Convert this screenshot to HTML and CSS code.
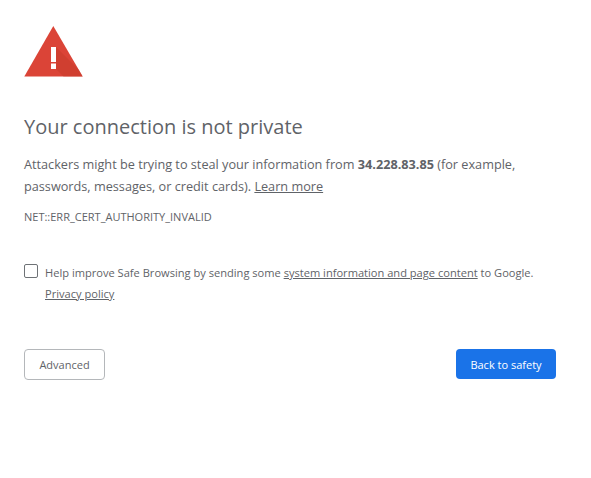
FILE: index.html
```html
<!DOCTYPE html>
<html lang="en">

<head>
    <meta charset="UTF-8">
    <meta name="viewport" content="width=device-width, initial-scale=1.0">
    <title>Privacy error</title>
    <link rel="stylesheet" href="styles.css">
</head>

<body>
    <div class="container">
        <!-- Warning icon -->
        <svg class="icon" width="60" height="52" viewBox="0 0 60 52">
            <path d="M29.3 1 L58.7 51.5 L0.3 51.5 Z" fill="#db4437" />
            <path d="M32 22 L54.8 44.8 L58.7 51.5 L39.5 51.5 L32 44 Z" fill="#c53929" opacity="0.5" />
            <rect x="27" y="22" width="5" height="15" fill="#fff" />
            <rect x="27" y="38.5" width="5" height="5.5" fill="#fff" />
        </svg>

        <h1>Your connection is not private</h1>
        <p class="message">Attackers might be trying to steal your information from <strong>34.228.83.85</strong> (for example, passwords, messages, or credit cards). <a href="#">Learn more</a></p>
        <p class="error-code">NET::ERR_CERT_AUTHORITY_INVALID</p>

        <!-- Safe Browsing opt in -->
        <div class="opt-in">
            <span class="checkbox"></span>
            <div>
                <p>Help improve Safe Browsing by sending some <a href="#">system information and page content</a> to Google.</p>
                <p><a href="#">Privacy policy</a></p>
            </div>
        </div>

        <div class="buttons">
            <button class="advanced">Advanced</button>
            <button class="back">Back to safety</button>
        </div>
    </div>
</body>

</html>
```

FILE: styles.css
```css
body {
    font-family: "Open Sans", "Noto Sans", Arial, sans-serif;
    margin: 0;
    padding: 0;
    background-color: #fff;
    color: #5f6368;
}

.container {
    width: 532px;
    padding: 25px 0 0 24px;
}

.icon {
    display: block;
    margin-bottom: 35px;
}

h1 {
    margin: 0;
    font-size: 20px;
    font-weight: 400;
    line-height: 30px;
}

a {
    color: #5f6368;
}

.message {
    margin: 11px 0 0;
    font-size: 12.7px;
    line-height: 22px;
}

.error-code {
    margin: 12px 0 0;
    font-size: 11px;
    line-height: 16px;
}

.opt-in {
    display: flex;
    margin-top: 37px;
    font-size: 11.1px;
    line-height: 21px;
}

.opt-in p {
    margin: 0;
}

.checkbox {
    flex: none;
    width: 12px;
    height: 12px;
    margin: 2px 7px 0 0;
    border: 1px solid #6e7276;
    border-radius: 2px;
}

.buttons {
    display: flex;
    justify-content: space-between;
    align-items: flex-start;
    margin-top: 45px;
}

button {
    font-family: inherit;
    font-size: 11px;
    border-radius: 4px;
    cursor: pointer;
}

.advanced {
    width: 81px;
    height: 31px;
    background-color: #fff;
    color: #5f6368;
    border: 1px solid #b4b7ba;
}

.back {
    width: 100px;
    height: 30px;
    background-color: #1a73e8;
    color: #fff;
    border: none;
}
```
